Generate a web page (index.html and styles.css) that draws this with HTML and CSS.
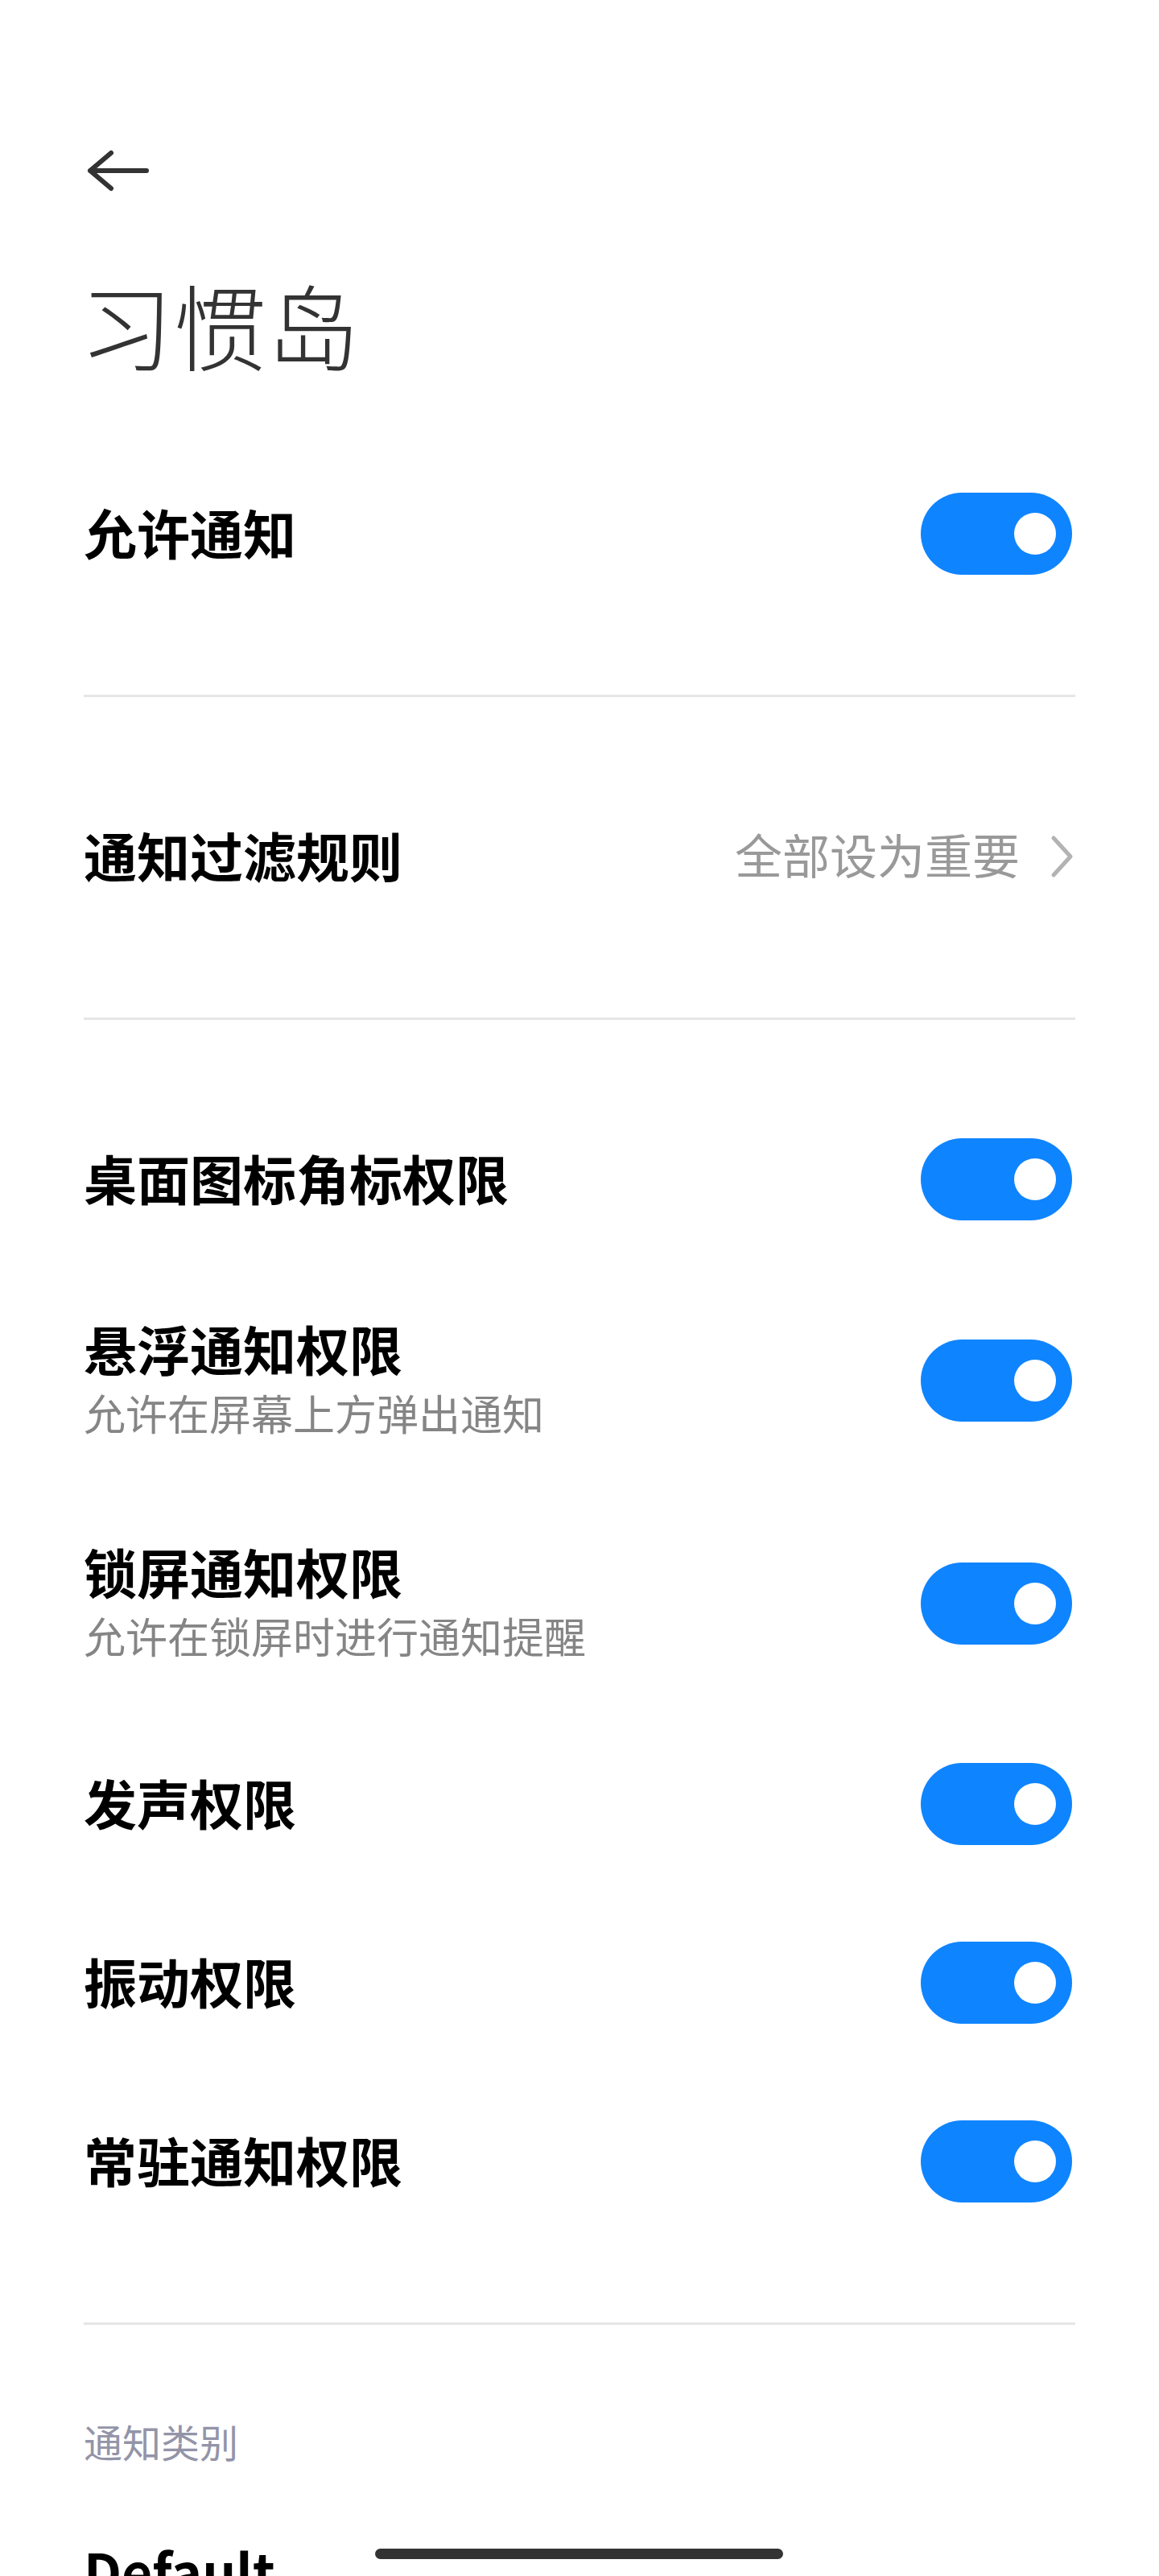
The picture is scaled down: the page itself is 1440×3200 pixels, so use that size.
FILE: index.html
```html
<!DOCTYPE html>
<html lang="zh-CN">
<head>
<meta charset="utf-8">
<title>习惯岛</title>
<link rel="stylesheet" href="styles.css">
</head>
<body>
<div class="screen">
  <header class="header">
    <div class="back" aria-label="返回">
      <svg width="84" height="60" viewBox="0 0 84 60"><path d="M78 30H8M34 8L8 30L34 52" fill="none" stroke="#333" stroke-width="6" stroke-linecap="round" stroke-linejoin="round"/></svg>
    </div>
    <h1 class="title">习惯岛</h1>
  </header>

  <section class="group">
    <div class="row">
      <div class="text"><div class="name">允许通知</div></div>
      <span class="switch"><span class="knob"></span></span>
    </div>
  </section>
  <hr class="divider">

  <section class="group">
    <div class="row">
      <div class="text"><div class="name">通知过滤规则</div></div>
      <div class="value">
        <span class="value-text">全部设为重要</span>
        <svg class="chev" width="30" height="56" viewBox="0 0 30 56"><path d="M5 5L26 28L5 51" fill="none" stroke="#b3b3b3" stroke-width="5" stroke-linecap="round" stroke-linejoin="round"/></svg>
      </div>
    </div>
  </section>
  <hr class="divider">

  <section class="group">
    <div class="row">
      <div class="text"><div class="name">桌面图标角标权限</div></div>
      <span class="switch"><span class="knob"></span></span>
    </div>
    <div class="row two">
      <div class="text"><div class="name">悬浮通知权限</div><div class="desc">允许在屏幕上方弹出通知</div></div>
      <span class="switch"><span class="knob"></span></span>
    </div>
    <div class="row two">
      <div class="text"><div class="name">锁屏通知权限</div><div class="desc">允许在锁屏时进行通知提醒</div></div>
      <span class="switch"><span class="knob"></span></span>
    </div>
    <div class="row">
      <div class="text"><div class="name">发声权限</div></div>
      <span class="switch"><span class="knob"></span></span>
    </div>
    <div class="row">
      <div class="text"><div class="name">振动权限</div></div>
      <span class="switch"><span class="knob"></span></span>
    </div>
    <div class="row">
      <div class="text"><div class="name">常驻通知权限</div></div>
      <span class="switch"><span class="knob"></span></span>
    </div>
  </section>
  <hr class="divider">

  <section class="category">
    <div class="category-label">通知类别</div>
    <div class="category-item">Default</div>
  </section>
</div>
<div class="home-indicator"></div>
</body>
</html>
```

FILE: styles.css
```css
html, body {
  margin: 0;
  padding: 0;
  background: #fff;
}
body {
  font-family: "Noto Sans CJK SC", "Noto Sans", sans-serif;
  color: #000;
}
.screen {
  box-sizing: border-box;
  height: 3200px;
  overflow: hidden;
  padding: 0 104px;
}
.header {
  padding-top: 182px;
}
.back {
  width: 84px;
  height: 60px;
}
.back svg {
  display: block;
}
.title {
  margin: 95px 0 0 -5px;
  font-size: 116px;
  line-height: 128px;
  font-weight: 300;
  color: #333;
}
.group {
  padding: 87px 0 89px;
}
.row {
  display: flex;
  align-items: center;
  justify-content: space-between;
  height: 222px;
}
.row.two {
  height: 277px;
}
.text {
  margin-bottom: 7px;
}
.name {
  font-size: 66px;
  line-height: 80px;
  font-weight: 600;
  color: #000;
}
.desc {
  margin-top: 8px;
  font-size: 52px;
  line-height: 66px;
  color: #858585;
}
.switch {
  box-sizing: border-box;
  display: flex;
  align-items: center;
  justify-content: flex-end;
  width: 188px;
  height: 102px;
  padding-right: 20px;
  margin-right: 4px;
  border-radius: 51px;
  background: #0f84ff;
}
.knob {
  width: 52px;
  height: 52px;
  border-radius: 50%;
  background: #fff;
}
.value {
  display: flex;
  align-items: center;
  gap: 37px;
  margin-right: 2px;
}
.value-text {
  font-size: 59px;
  line-height: 80px;
  color: #999;
  margin-bottom: 6px;
}
.chev {
  display: block;
}
.divider {
  height: 3px;
  margin: 0;
  border: 0;
  background: #e6e6e6;
}
.category-label {
  margin-top: 114px;
  font-size: 48px;
  line-height: 60px;
  color: #9394a8;
}
.category-item {
  margin-top: 90px;
  font-size: 66px;
  line-height: 80px;
  font-weight: 600;
  color: #000;
}
.home-indicator {
  position: fixed;
  left: 466px;
  bottom: 21px;
  width: 507px;
  height: 13px;
  border-radius: 7px;
  background: #333;
}
```
